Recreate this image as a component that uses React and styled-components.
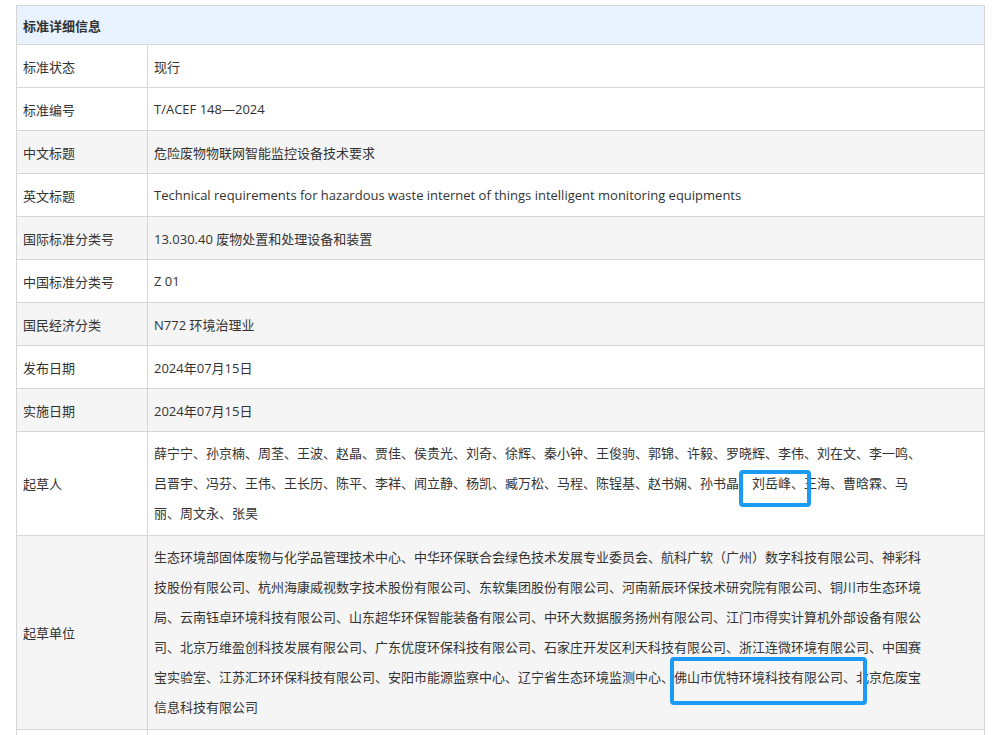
import React from "react";
import styled, { createGlobalStyle } from "styled-components";

const Global = createGlobalStyle`
  body { margin: 0; background: #fff; font-family: "Open Sans", "Noto Sans CJK SC", sans-serif; overflow: hidden; }
`;
const Wrap = styled.div`padding: 5px 14px 0 16px;`;
const Table = styled.table`
  width: 969px; border-collapse: collapse; font-size: 13px; color: #333; table-layout: fixed;
  td, th { border: 1px solid #d6d6d6; padding: 0 6px; vertical-align: middle; }
`;
const Head = styled.th`
  background: #e8f3ff; height: 38px; text-align: left; font-weight: bold; font-size: 13px;
`;
const Row = styled.tr`
  background: ${p => (p.$grey ? "#f5f5f5" : "#fff")};
  td { height: ${p => p.$h || 42}px; }
`;
const Label = styled.td`width: 118px;`;
const Lines = styled.td`padding-top: 6px !important; padding-bottom: 7px !important;`;
const Line = styled.div`line-height: 30px; height: 30px; white-space: nowrap;`;
const Mark = styled.span`
  position: relative; display: inline-block; line-height: 30px; height: 30px; vertical-align: top;
  &::after {
    content: ""; position: absolute; border: 4px solid #1b9bf5; border-radius: 4px;
    left: ${p => p.$l}px; right: ${p => p.$r}px; top: ${p => p.$t}px; bottom: ${p => p.$b}px;
  }
`;

const rows = [
  ["标准状态", "现行", false],
  ["标准编号", "T/ACEF 148—2024", false],
  ["中文标题", "危险废物物联网智能监控设备技术要求", true],
  ["英文标题", "Technical requirements for hazardous waste internet of things intelligent monitoring equipments", false],
  ["国际标准分类号", "13.030.40 废物处置和处理设备和装置", true],
  ["中国标准分类号", "Z 01", false],
  ["国民经济分类", "N772 环境治理业", true],
  ["发布日期", "2024年07月15日", false],
  ["实施日期", "2024年07月15日", true],
];

export default function App() {
  return (
    <Wrap>
      <Global />
      <Table>
        <colgroup><col style={{ width: 131 }} /><col /></colgroup>
        <thead><tr><Head colSpan={2}>标准详细信息</Head></tr></thead>
        <tbody>
          {rows.map(([k, v, g]) => (
            <Row key={k} $grey={g}><Label>{k}</Label><td>{v}</td></Row>
          ))}
          <Row>
            <Label>起草人</Label>
            <Lines>
              <Line>薛宁宁、孙京楠、周荃、王波、赵晶、贾佳、侯贵光、刘奇、徐辉、秦小钟、王俊驹、郭锦、许毅、罗晓辉、李伟、刘在文、李一鸣、</Line>
              <Line>吕晋宇、冯芬、王伟、王长历、陈平、李祥、闻立静、杨凯、臧万松、马程、陈锃基、赵书娴、孙书晶、<Mark $l={-13} $r={-7} $t={2} $b={-9}>刘岳峰、</Mark>王海、曹晗霖、马</Line>
              <Line>丽、周文永、张昊</Line>
            </Lines>
          </Row>
          <Row $grey>
            <Label>起草单位</Label>
            <Lines>
              <Line>生态环境部固体废物与化学品管理技术中心、中华环保联合会绿色技术发展专业委员会、航科广软（广州）数字科技有限公司、神彩科</Line>
              <Line>技股份有限公司、杭州海康威视数字技术股份有限公司、东软集团股份有限公司、河南新辰环保技术研究院有限公司、铜川市生态环境</Line>
              <Line>局、云南钰卓环境科技有限公司、山东超华环保智能装备有限公司、中环大数据服务扬州有限公司、江门市得实计算机外部设备有限公</Line>
              <Line>司、北京万维盈创科技发展有限公司、广东优度环保科技有限公司、石家庄开发区利天科技有限公司、浙江连微环境有限公司、中国赛</Line>
              <Line>宝实验室、江苏汇环环保科技有限公司、安阳市能源监察中心、辽宁省生态环境监测中心、<Mark $l={-4} $r={-11} $t={-5} $b={-13}>佛山市优特环境科技有限公司、</Mark>北京危废宝</Line>
              <Line>信息科技有限公司</Line>
            </Lines>
          </Row>
          <Row><Label></Label><td></td></Row>
        </tbody>
      </Table>
    </Wrap>
  );
}
